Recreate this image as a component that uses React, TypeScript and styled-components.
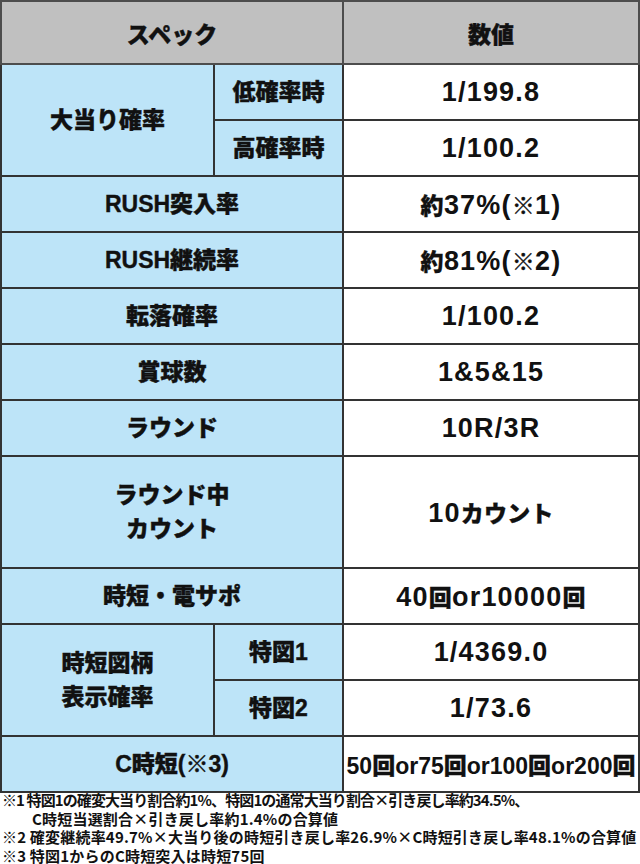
import React from "react";
import styled, { createGlobalStyle } from "styled-components";

const GlobalStyle = createGlobalStyle`
  body {
    margin: 0;
    background: #ffffff;
    font-family: "Noto Sans CJK JP", "Noto Sans", sans-serif;
    color: #111111;
  }
`;

const Page = styled.div`
  width: 640px;
`;

const SpecTable = styled.table`
  width: 640px;
  border-collapse: collapse;
  table-layout: fixed;
  border: 2px solid #4d4d4d;
`;

const Row = styled.tr<{ tall?: boolean }>`
  height: ${(props) => (props.tall ? "112px" : "56px")};
`;

const HeadRow = styled.tr`
  height: 63px;
`;

const HeadCell = styled.th`
  background: #c0c0c0;
  border: 2px solid #4d4d4d;
  font-size: 23px;
  font-weight: 900;
  -webkit-text-stroke: 0.4px #111111;
  text-align: center;
  vertical-align: middle;
  padding: 0;
`;

const LabelCell = styled.td`
  background: #bde4f8;
  border: 2px solid #333333;
  font-family: "Liberation Sans", "Noto Sans CJK JP", sans-serif;
  font-size: 23px;
  font-weight: 900;
  -webkit-text-stroke: 0.4px #111111;
  line-height: 34px;
  text-align: center;
  vertical-align: middle;
  padding: 0;
  white-space: nowrap;
`;

const ValueCell = styled.td<{ compact?: boolean }>`
  background: #ffffff;
  border: 2px solid #333333;
  font-family: "Liberation Sans", "Noto Sans CJK JP", sans-serif;
  font-size: ${(props) => (props.compact ? "23px" : "27px")};
  letter-spacing: ${(props) => (props.compact ? "0" : "1.2px")};
  font-weight: 700;
  text-align: center;
  vertical-align: middle;
  padding: 0;
  white-space: nowrap;
`;

// CJK glyphs in the value column sit a little smaller than the digits
const Kana = styled.span<{ compact?: boolean }>`
  font-family: "Noto Sans CJK JP", sans-serif;
  font-size: 23px;
  font-weight: 900;
  -webkit-text-stroke: 0.3px #111111;
  letter-spacing: ${(props) => (props.compact ? "0" : "0.3px")};
`;

const Notes = styled.div`
  margin-top: -2px;
  padding-left: 2px;
  font-size: 15px;
  font-weight: 700;
  line-height: 18.5px;
  white-space: nowrap;
`;

const NoteLine = styled.div<{ indent?: boolean; tight?: boolean }>`
  height: 18.6px;
  padding-left: ${(props) => (props.indent ? "30px" : "0")};
  letter-spacing: ${(props) => (props.tight ? "-0.9px" : "0.2px")};
`;

type Spec = {
  label: string;
  value: string;
  tall?: boolean;
};

const singles: Spec[] = [
  { label: "RUSH突入率", value: "約37%(※1)" },
  { label: "RUSH継続率", value: "約81%(※2)" },
  { label: "転落確率", value: "1/100.2" },
  { label: "賞球数", value: "1&5&15" },
  { label: "ラウンド", value: "10R/3R" },
  { label: "ラウンド中\nカウント", value: "10カウント", tall: true },
  { label: "時短・電サポ", value: "40回or10000回" },
];

const multiline = (text: string) =>
  text.split("\n").map((line, i) => (
    <React.Fragment key={i}>
      {i > 0 && <br />}
      {line}
    </React.Fragment>
  ));

// split a value into latin / CJK runs so each run gets its own size
const valueText = (text: string, compact?: boolean) =>
  text.split(/([^\x00-\x7f]+)/).map((part, i) =>
    i % 2 === 1 ? (
      <Kana key={i} compact={compact}>
        {part}
      </Kana>
    ) : (
      part
    )
  );

export default function App() {
  return (
    <Page>
      <GlobalStyle />
      <SpecTable>
        <colgroup>
          <col style={{ width: 213 }} />
          <col style={{ width: 129 }} />
          <col />
        </colgroup>
        <thead>
          <HeadRow>
            <HeadCell colSpan={2}>スペック</HeadCell>
            <HeadCell>数値</HeadCell>
          </HeadRow>
        </thead>
        <tbody>
          <Row>
            <LabelCell rowSpan={2}>大当り確率</LabelCell>
            <LabelCell>低確率時</LabelCell>
            <ValueCell>1/199.8</ValueCell>
          </Row>
          <Row>
            <LabelCell>高確率時</LabelCell>
            <ValueCell>1/100.2</ValueCell>
          </Row>
          {singles.map((s) => (
            <Row key={s.label} tall={s.tall}>
              <LabelCell colSpan={2}>{multiline(s.label)}</LabelCell>
              <ValueCell>{valueText(s.value)}</ValueCell>
            </Row>
          ))}
          <Row>
            <LabelCell rowSpan={2}>{multiline("時短図柄\n表示確率")}</LabelCell>
            <LabelCell>特図1</LabelCell>
            <ValueCell>1/4369.0</ValueCell>
          </Row>
          <Row>
            <LabelCell>特図2</LabelCell>
            <ValueCell>1/73.6</ValueCell>
          </Row>
          <Row>
            <LabelCell colSpan={2}>C時短(※3)</LabelCell>
            <ValueCell compact>{valueText("50回or75回or100回or200回", true)}</ValueCell>
          </Row>
        </tbody>
      </SpecTable>
      <Notes>
        <NoteLine tight>※1 特図1の確変大当り割合約1%、特図1の通常大当り割合×引き戻し率約34.5%、</NoteLine>
        <NoteLine indent>C時短当選割合×引き戻し率約1.4%の合算値</NoteLine>
        <NoteLine>※2 確変継続率49.7%×大当り後の時短引き戻し率26.9%×C時短引き戻し率48.1%の合算値</NoteLine>
        <NoteLine>※3 特図1からのC時短突入は時短75回</NoteLine>
      </Notes>
    </Page>
  );
}
